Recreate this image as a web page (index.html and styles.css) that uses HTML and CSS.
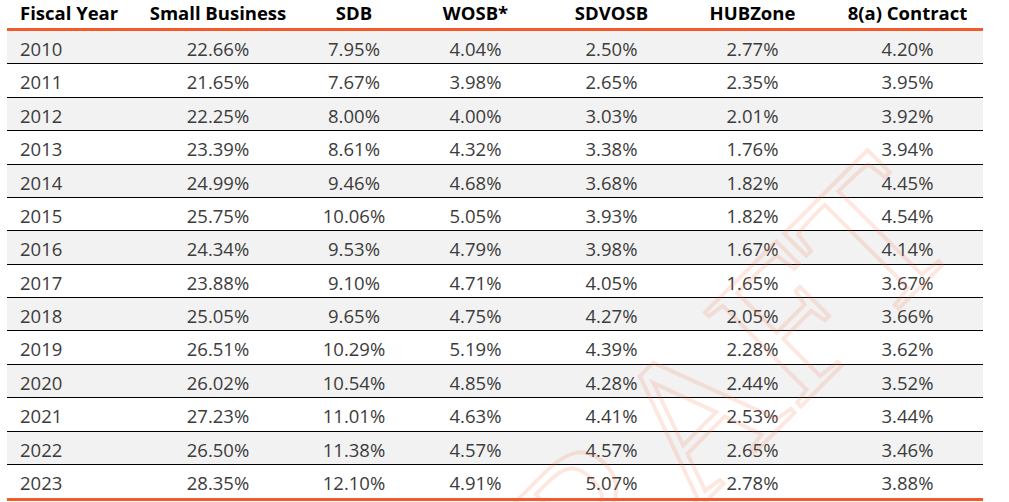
FILE: index.html
```html
<!DOCTYPE html>
<html lang="en">
<head>
<meta charset="utf-8">
<title>Small Business Goaling</title>
<link rel="stylesheet" href="styles.css">
</head>
<body>
<div class="page">
  <div class="data" role="table">
    <div class="row head" role="row">
      <div class="cell first">Fiscal Year</div><div class="cell">Small Business</div><div class="cell">SDB</div><div class="cell">WOSB*</div><div class="cell">SDVOSB</div><div class="cell">HUBZone</div><div class="cell">8(a) Contract</div>
    </div>
    <div class="row shade"><div class="cell first">2010</div><div class="cell">22.66%</div><div class="cell">7.95%</div><div class="cell">4.04%</div><div class="cell">2.50%</div><div class="cell">2.77%</div><div class="cell">4.20%</div></div>
    <div class="row"><div class="cell first">2011</div><div class="cell">21.65%</div><div class="cell">7.67%</div><div class="cell">3.98%</div><div class="cell">2.65%</div><div class="cell">2.35%</div><div class="cell">3.95%</div></div>
    <div class="row shade"><div class="cell first">2012</div><div class="cell">22.25%</div><div class="cell">8.00%</div><div class="cell">4.00%</div><div class="cell">3.03%</div><div class="cell">2.01%</div><div class="cell">3.92%</div></div>
    <div class="row"><div class="cell first">2013</div><div class="cell">23.39%</div><div class="cell">8.61%</div><div class="cell">4.32%</div><div class="cell">3.38%</div><div class="cell">1.76%</div><div class="cell">3.94%</div></div>
    <div class="row shade"><div class="cell first">2014</div><div class="cell">24.99%</div><div class="cell">9.46%</div><div class="cell">4.68%</div><div class="cell">3.68%</div><div class="cell">1.82%</div><div class="cell">4.45%</div></div>
    <div class="row"><div class="cell first">2015</div><div class="cell">25.75%</div><div class="cell">10.06%</div><div class="cell">5.05%</div><div class="cell">3.93%</div><div class="cell">1.82%</div><div class="cell">4.54%</div></div>
    <div class="row shade"><div class="cell first">2016</div><div class="cell">24.34%</div><div class="cell">9.53%</div><div class="cell">4.79%</div><div class="cell">3.98%</div><div class="cell">1.67%</div><div class="cell">4.14%</div></div>
    <div class="row"><div class="cell first">2017</div><div class="cell">23.88%</div><div class="cell">9.10%</div><div class="cell">4.71%</div><div class="cell">4.05%</div><div class="cell">1.65%</div><div class="cell">3.67%</div></div>
    <div class="row shade"><div class="cell first">2018</div><div class="cell">25.05%</div><div class="cell">9.65%</div><div class="cell">4.75%</div><div class="cell">4.27%</div><div class="cell">2.05%</div><div class="cell">3.66%</div></div>
    <div class="row"><div class="cell first">2019</div><div class="cell">26.51%</div><div class="cell">10.29%</div><div class="cell">5.19%</div><div class="cell">4.39%</div><div class="cell">2.28%</div><div class="cell">3.62%</div></div>
    <div class="row shade"><div class="cell first">2020</div><div class="cell">26.02%</div><div class="cell">10.54%</div><div class="cell">4.85%</div><div class="cell">4.28%</div><div class="cell">2.44%</div><div class="cell">3.52%</div></div>
    <div class="row"><div class="cell first">2021</div><div class="cell">27.23%</div><div class="cell">11.01%</div><div class="cell">4.63%</div><div class="cell">4.41%</div><div class="cell">2.53%</div><div class="cell">3.44%</div></div>
    <div class="row shade"><div class="cell first">2022</div><div class="cell">26.50%</div><div class="cell">11.38%</div><div class="cell">4.57%</div><div class="cell">4.57%</div><div class="cell">2.65%</div><div class="cell">3.46%</div></div>
    <div class="row last"><div class="cell first">2023</div><div class="cell">28.35%</div><div class="cell">12.10%</div><div class="cell">4.91%</div><div class="cell">5.07%</div><div class="cell">2.78%</div><div class="cell">3.88%</div></div>
  </div>
  <div class="watermark" aria-hidden="true">DRAFT</div>
</div>
</body>
</html>
```
FILE: styles.css
```css
html, body {
  margin: 0;
  padding: 0;
  background: #ffffff;
}
body {
  width: 1009px;
  height: 502px;
  overflow: hidden;
}
.page {
  position: relative;
  height: 502px;
  overflow: hidden;
  padding-left: 7px;
  font-family: "Open Sans", "Noto Sans", sans-serif;
  font-size: 18.5px;
}
.data {
  width: 976px;
  display: flex;
  flex-direction: column;
}
.row {
  display: grid;
  grid-template-columns: 122px 178px 94px 149px 123px 159px 151px;
  box-sizing: border-box;
  height: 33.38px;
  padding-top: 3px;
  line-height: 29px;
  color: #3c3c3c;
  border-bottom: 1px solid #000000;
  white-space: nowrap;
}
.row.shade {
  background: #f2f2f2;
}
.row.head {
  height: 31px;
  padding-top: 0;
  line-height: 26px;
  font-weight: 700;
  color: #000000;
  border-bottom: 3px solid #f15a2b;
}
.row.last {
  height: 36px;
  border-bottom: 3px solid #f15a2b;
}
.cell {
  text-align: center;
}
.cell.first {
  text-align: left;
  padding-left: 13px;
}
.watermark {
  position: absolute;
  left: 368px;
  top: 596px;
  font-family: "Liberation Serif", serif;
  font-size: 205px;
  line-height: 1;
  color: transparent;
  -webkit-text-stroke: 4px rgba(245, 110, 70, 0.16);
  transform: rotate(-45deg);
  transform-origin: left top;
  pointer-events: none;
  white-space: nowrap;
}
```
